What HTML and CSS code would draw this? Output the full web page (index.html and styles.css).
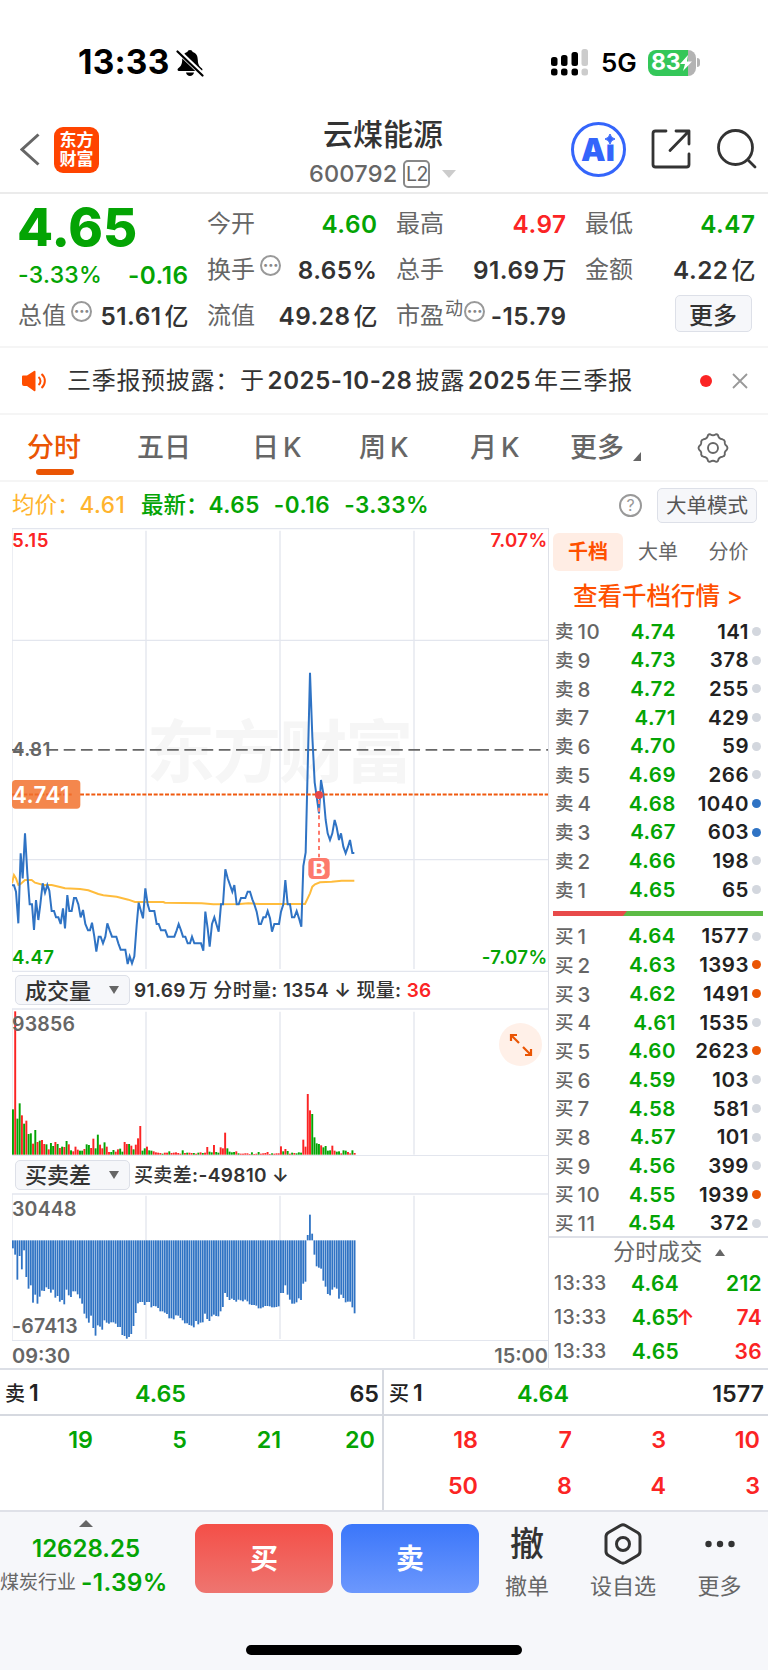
FILE: index.html
```
<!DOCTYPE html>
<html lang="zh-CN">
<head>
    <meta charset="UTF-8">
    <meta name="viewport" content="width=device-width, initial-scale=1.0">
    <title>云煤能源 600792</title>
    <link rel="stylesheet" href="styles.css">
</head>
<body>
    <div class="status-bar">
        <span class="clock">13:33</span>
        <svg class="bell" width="28" height="28" viewBox="0 0 28 28">
            <path d="M14 1c-1.500 0-2.300.8-2.700 1.900C7.500 4 6.300 7 6.200 11c-.2 5-1.700 6.500-4.200 8.600-.9.900-.5 2.400.9 2.400h22.200c1.400 0 1.800-1.500.9-2.400-2.500-2.100-4-3.600-4.200-8.600-.1-4-1.300-7-5.100-8.100C16.300 1.800 15.500 1 14 1zM10 23.500h8c-.4 2.200-2 3.500-4 3.500s-3.600-1.300-4-3.500z"/>
            <path d="M2 2l25 24" stroke="#fff" stroke-width="5"/>
            <path d="M1.500 2.500l25 24" stroke="#000" stroke-width="2.200" stroke-linecap="round"/>
        </svg>
        <div class="status-right">
            <svg width="38" height="27" viewBox="0 0 38 27">
                <g fill="#000">
                    <rect x="0" y="8" width="6.500" height="9" rx="2.500"/><rect x="10" y="6" width="6.500" height="11" rx="2.500"/><rect x="20.500" y="3" width="6.500" height="14" rx="2.500"/>
                    <rect x="0" y="19.500" width="6.500" height="7" rx="2.500"/><rect x="10" y="19.500" width="6.500" height="7" rx="2.500"/><rect x="20.500" y="19.500" width="6.500" height="7" rx="2.500"/>
                </g>
                <g fill="#ccc"><rect x="30.500" y="0" width="6.500" height="17" rx="2.500"/><rect x="30.500" y="19.500" width="6.500" height="7" rx="2.500"/></g>
            </svg>
            <span class="net">5G</span>
            <div class="battery"><span>83</span><svg width="12" height="16" viewBox="0 0 12 16"><path d="M8 0L0 9h5l-2 7 9-9.500H7z" fill="#fff"/></svg></div>
            <i class="battery-cap"></i>
        </div>
    </div>

    <header class="header">
        <div class="header-left">
            <svg width="20" height="33" viewBox="0 0 20 33" fill="none" stroke="#666" stroke-width="3"><path d="M18.500 1.500L2 16.500l16.500 15"/></svg>
            <div class="logo">东方<br>财富</div>
        </div>
        <div class="title">
            <h1>云煤能源</h1>
            <div class="code">600792<span class="l2">L2</span><i class="tri-down light"></i></div>
        </div>
        <div class="header-right">
            <div class="ai">Ai<svg width="12" height="12" viewBox="0 0 12 12"><path d="M0 0h12v10.500H0z" fill="#fff"/><path d="M6 0q.8 4.200 5 5-4.200.8-5 5-.8-4.200-5-5 4.200-.8 5-5z" fill="#3465fb" stroke="#3465fb"/></svg></div>
            <svg width="41" height="40" viewBox="0 0 41 40" fill="none" stroke="#333" stroke-width="2.800" stroke-linecap="round" stroke-linejoin="round"><path d="M15 2H4.500a2.500 2.500 0 0 0-2.500 2.500v31A2.500 2.500 0 0 0 4.500 38h31a2.500 2.500 0 0 0 2.500-2.500V25M25 2h13v13M38 2L19 21.500"/></svg>
            <svg width="40" height="40" viewBox="0 0 40 40" fill="none" stroke="#333" stroke-width="2.800" stroke-linecap="round"><circle cx="18.500" cy="18.500" r="17"/><path d="M31 31l7 7"/></svg>
        </div>
    </header>

    <section class="quote">
        <div class="quote-main">
            <div class="last-price">4.65</div>
            <div class="line"><b class="green chg">-3.33%</b><b class="green">-0.16</b></div>
            <div class="line"><span>总值<i class="dots">···</i></span><b>51.61<em>亿</em></b></div>
        </div>
        <div class="quote-col">
            <div class="line"><span>今开</span><b class="green">4.60</b></div>
            <div class="line"><span>换手<i class="dots">···</i></span><b>8.65%</b></div>
            <div class="line"><span>流值</span><b>49.28<em>亿</em></b></div>
        </div>
        <div class="quote-col">
            <div class="line"><span>最高</span><b class="red">4.97</b></div>
            <div class="line"><span>总手</span><b>91.69<em>万</em></b></div>
            <div class="line"><span>市盈<sup>动</sup><i class="dots pe">···</i></span><b>-15.79</b></div>
        </div>
        <div class="quote-col">
            <div class="line"><span>最低</span><b class="green">4.47</b></div>
            <div class="line"><span>金额</span><b>4.22<em>亿</em></b></div>
            <div class="line end"><button class="btn-more">更多</button></div>
        </div>
    </section>

    <section class="notice">
        <svg width="26" height="22" viewBox="0 0 26 22"><path d="M1 6.500Q1 5.500 2 5.500h4L13 1q1.500-.8 1.500 1v18q0 1.800-1.500 1L6 16H3Q1 16 1 14z" fill="#ff4e00"/><path d="M17.500 7a5 5 0 0 1 0 8M20.500 4a9 9 0 0 1 0 14" fill="none" stroke="#ff4e00" stroke-width="2"/></svg>
        <p>三季报预披露：于<span>2025-10-28</span>披露<span>2025</span>年三季报</p>
        <i class="red-dot"></i>
        <svg width="16" height="16" viewBox="0 0 16 16" stroke="#999" stroke-width="1.800"><path d="M1 1l14 14M15 1L1 15"/></svg>
    </section>

    <nav class="tabs">
        <a class="active">分时</a>
        <a>五日</a>
        <a>日<span>K</span></a>
        <a>周<span>K</span></a>
        <a>月<span>K</span></a>
        <a class="tab-more">更多<i></i></a>
        <svg width="32" height="32" viewBox="0 0 32 32" fill="none" stroke="#666" stroke-width="1.900" stroke-linejoin="round"><path d="M11 3.200Q12 2 13.500 2.400Q16 4.200 18.500 2.400Q20 2 21 3.200Q21.500 7 25.500 7.300Q27.500 7.800 27.800 9.500Q27.500 11.500 28.200 12.500Q30.500 14.500 30.500 16T28.200 19.500Q27.500 20.500 27.800 22.500Q27.500 24.200 25.500 24.700Q21.500 25 21 28.800Q20 30 18.500 29.600Q16 27.800 13.500 29.600Q12 30 11 28.800Q10.500 25 6.500 24.700Q4.500 24.200 4.200 22.500Q4.500 20.500 3.800 19.500Q1.500 17.500 1.500 16T3.800 12.500Q4.500 11.500 4.200 9.500Q4.500 7.800 6.500 7.300Q10.500 7 11 3.200z"/><circle cx="16" cy="16" r="5"/></svg>
    </nav>

    <div class="info">
        <span class="avg">均价：<b>4.61</b></span>
        <span class="green now">最新：<b>4.65</b><b>-0.16</b><b>-3.33%</b></span>
        <i class="help">?</i>
        <button class="btn-mode">大单模式</button>
    </div>

    <main class="board">
        <div class="charts">
            <svg class="chart-price" id="price" width="536" height="444" viewBox="36 24 1608 1332">
                <text class="watermark" x="440" y="772" textLength="800">东方财富</text>
                <g class="grid">
                    <path d="M36 25.500H1644M36 361H1644M36 1019H1644M36 1354.500H1644M36 24V1356M438 32V1347M840 32V1347M1242 32V1347"/>
                </g>
                <path d="M36 689.500H1644" class="mid-line"/>
                <polyline class="avg-line" points="36,1090 42,1065 48,1075 55,1095 62,1092 75,1080 95,1080 105,1088 130,1095 155,1095 180,1101 195,1105 240,1107 265,1111 295,1122 310,1126 350,1130 385,1139 405,1146 490,1146 495,1148 605,1150 640,1153 720,1152 745,1150 780,1152 915,1152 930,1120 937,1100 945,1093 960,1087 995,1085 1025,1082 1063,1082"/>
                <polyline class="price-line" points="36,1096 42,1096 48,1115 55,1210 62,1000 68,1075 75,940 82,1060 89,1153 96,1153 102,1230 108,1140 115,1200 121,1153 128,1090 135,1118 142,1095 148,1112 155,1173 162,1173 168,1192 175,1192 182,1212 189,1165 195,1225 202,1125 208,1173 215,1173 222,1134 228,1134 235,1153 242,1192 249,1170 256,1212 264,1231 270,1231 276,1208 283,1250 289,1295 296,1250 302,1250 309,1270 316,1250 322,1210 329,1231 336,1250 349,1250 355,1270 362,1289 376,1289 383,1332 389,1309 396,1330 403,1309 410,1215 416,1148 422,1170 429,1195 436,1105 443,1153 449,1173 463,1173 470,1212 476,1212 483,1231 496,1231 503,1250 523,1250 530,1231 536,1212 543,1231 549,1250 556,1250 563,1270 570,1270 576,1250 583,1270 603,1270 610,1292 616,1175 623,1225 629,1280 636,1212 643,1192 649,1212 656,1235 663,1153 669,1153 676,1048 683,1075 697,1115 703,1095 710,1153 716,1153 723,1134 736,1134 743,1115 750,1115 757,1138 763,1153 770,1175 777,1212 783,1212 790,1192 797,1192 803,1173 810,1195 816,1235 823,1212 837,1212 843,1175 850,1153 856,1080 863,1153 870,1153 876,1192 883,1192 890,1173 897,1195 904,1220 910,1038 917,997 930,458 937,650 944,787 950,830 957,880 963,780 970,820 977,900 983,940 990,960 997,940 1004,900 1010,922 1017,960 1023,940 1030,980 1037,1000 1044,980 1050,960 1057,999 1063,999"/>
                <path d="M36 823.500H1644" class="cost-line"/>
                <rect x="36" y="780" width="205" height="86" rx="11" fill="#f4874d"/>
                <path d="M36 823.500H215" class="cost-line" opacity=".6"/>
                <path d="M957 840V1012" class="buy-line"/>
                <circle cx="957" cy="825" r="12" fill="#e5484a"/>
                <rect x="925" y="1014" width="64" height="63" rx="14" fill="#fd7a6c"/>
                <text x="957" y="1067" class="buy-mark">B</text>
                <text x="36" y="81" class="lbl red">5.15</text>
                <text x="1643" y="81" class="lbl red end">7.07%</text>
                <text x="36" y="708" class="lbl">4.81</text>
                <text x="36" y="848" class="tag">4.741</text>
                <text x="36" y="1331" class="lbl green">4.47</text>
                <text x="1643" y="1331" class="lbl green end">-7.07%</text>
            </svg>

            <div class="sub-head">
                <button class="picker"><span>成交量</span><i class="tri-down"></i></button>
                <p>91.69<em class="unit">万</em> <em>分时量</em>: 1354 ↓ <em>现量</em>: <span class="red">36</span></p>
            </div>
            <div class="pane">
                <svg id="volume" width="536" height="148" viewBox="36 113 1608 444">
                    <path class="grid" d="M36 116H1644M36 556H1644M36 116V556M438 124V553M840 124V553M1242 124V553"/>
                </svg>
                <span class="pane-label">93856</span>
                <div class="expand"><svg width="24" height="24" viewBox="0 0 24 24" fill="none" stroke="#ea5504" stroke-width="2.200"><path d="M2 8V2h6M2 2l8 8M22 16v6h-6M22 22l-8-8"/></svg></div>
            </div>

            <div class="sub-head second">
                <button class="picker"><span>买卖差</span><i class="tri-down"></i></button>
                <p><em>买卖差</em>:-49810 ↓</p>
            </div>
            <div class="pane">
                <svg id="diff" width="536" height="148" viewBox="36 98 1608 444">
                    <path class="grid" d="M36 101H1644M36 541H1644M36 101V541M438 106V536M840 106V536M1242 106V536"/>
                </svg>
                <span class="pane-label">30448</span>
                <span class="pane-label low">-67413</span>
            </div>
            <div class="axis"><span>09:30</span><span>15:00</span></div>
        </div>

        <aside class="book">
            <div class="book-tabs"><a class="on">千档</a><a>大单</a><a>分价</a></div>
            <div class="book-link">查看千档行情 &gt;</div>
            <div class="level"><span>卖<b>10</b></span><b>4.74</b><b>141</b><i></i></div>
            <div class="level"><span>卖<b>9</b></span><b>4.73</b><b>378</b><i></i></div>
            <div class="level"><span>卖<b>8</b></span><b>4.72</b><b>255</b><i></i></div>
            <div class="level"><span>卖<b>7</b></span><b>4.71</b><b>429</b><i></i></div>
            <div class="level"><span>卖<b>6</b></span><b>4.70</b><b>59</b><i></i></div>
            <div class="level"><span>卖<b>5</b></span><b>4.69</b><b>266</b><i></i></div>
            <div class="level"><span>卖<b>4</b></span><b>4.68</b><b>1040</b><i class="big-sell"></i></div>
            <div class="level"><span>卖<b>3</b></span><b>4.67</b><b>603</b><i class="big-sell"></i></div>
            <div class="level"><span>卖<b>2</b></span><b>4.66</b><b>198</b><i></i></div>
            <div class="level"><span>卖<b>1</b></span><b>4.65</b><b>65</b><i></i></div>
            <div class="ratio"></div>
            <div class="level"><span>买<b>1</b></span><b>4.64</b><b>1577</b><i></i></div>
            <div class="level"><span>买<b>2</b></span><b>4.63</b><b>1393</b><i class="big-buy"></i></div>
            <div class="level"><span>买<b>3</b></span><b>4.62</b><b>1491</b><i class="big-buy"></i></div>
            <div class="level"><span>买<b>4</b></span><b>4.61</b><b>1535</b><i></i></div>
            <div class="level"><span>买<b>5</b></span><b>4.60</b><b>2623</b><i class="big-buy"></i></div>
            <div class="level"><span>买<b>6</b></span><b>4.59</b><b>103</b><i></i></div>
            <div class="level"><span>买<b>7</b></span><b>4.58</b><b>581</b><i></i></div>
            <div class="level"><span>买<b>8</b></span><b>4.57</b><b>101</b><i></i></div>
            <div class="level"><span>买<b>9</b></span><b>4.56</b><b>399</b><i></i></div>
            <div class="level"><span>买<b>10</b></span><b>4.55</b><b>1939</b><i class="big-buy"></i></div>
            <div class="level"><span>买<b>11</b></span><b>4.54</b><b>372</b><i></i></div>
            <div class="deals">
                <div class="deals-head">分时成交<i class="tri-up"></i></div>
                <div class="deal"><span>13:33</span><b class="green">4.64</b><i></i><b class="green">212</b></div>
                <div class="deal"><span>13:33</span><b class="green">4.65</b><i class="red">↑</i><b class="red">74</b></div>
                <div class="deal"><span>13:33</span><b class="green">4.65</b><i></i><b class="red">36</b></div>
            </div>
        </aside>
    </main>

    <section class="queue">
        <div class="side">
            <div class="side-head"><span>卖<b>1</b></span><b class="green">4.65</b><b>65</b></div>
            <div class="orders green"><b>19</b><b>5</b><b>21</b><b>20</b></div>
        </div>
        <div class="side">
            <div class="side-head"><span>买<b>1</b></span><b class="green">4.64</b><b>1577</b></div>
            <div class="orders red"><b>18</b><b>7</b><b>3</b><b>10</b><b>50</b><b>8</b><b>4</b><b>3</b></div>
        </div>
    </section>

    <footer class="footer">
        <div class="sector">
            <i class="tri-up"></i>
            <b class="green">12628.25</b>
            <div>煤炭行业<b class="green">-1.39%</b></div>
        </div>
        <button class="trade buy">买</button>
        <button class="trade sell">卖</button>
        <div class="tool"><strong>撤</strong><span>撤单</span></div>
        <div class="tool wide"><svg width="40" height="42" viewBox="0 0 40 42" fill="none" stroke="#333" stroke-width="3" stroke-linejoin="round"><path d="M17.500 2.500q2.500-1.300 5 0l12 7q2.500 1.500 2.500 4v15q0 2.500-2.500 4l-12 7q-2.500 1.300-5 0l-12-7q-2.500-1.500-2.500-4v-15q0-2.500 2.500-4z"/><circle cx="20" cy="21" r="6.500"/></svg><span>设自选</span></div>
        <div class="tool last"><svg width="40" height="42" viewBox="0 0 40 42" fill="#333"><circle cx="8.500" cy="21" r="3.200"/><circle cx="20" cy="21" r="3.200"/><circle cx="31.500" cy="21" r="3.200"/></svg><span>更多</span></div>
        <div class="home-bar"></div>
    </footer>

    <script src="script.js"></script>
</body>
</html>
```

FILE: styles.css
```
* {
    box-sizing: border-box;
}

body {
    margin: 0;
    width: 768px;
    height: 1670px;
    overflow: hidden;
    background: #fff;
    color: #333;
    font-family: Inter, "Noto Sans CJK SC", sans-serif;
    font-size: 24px;
    line-height: 1;
}

i, em {
    font-style: normal;
}

b {
    font-weight: 600;
}

button {
    font-family: inherit;
    padding: 0;
    color: #333;
    background: #f6f7fa;
    border: 1px solid #dde0e8;
    border-radius: 5px;
}

svg {
    display: block;
    flex: none;
}

.green { color: #04a404; fill: #04a404; }
.red { color: #fb2424; fill: #fb2424; }

.tri-down, .tri-up {
    display: inline-block;
    border: 5px solid transparent;
}

.tri-down {
    border-top: 8px solid #666;
    border-bottom: 0;
}

.tri-down.light {
    border-width: 8px 7px 0;
    border-top-color: #ccc;
    margin-left: 12px;
}

.tri-up {
    border-bottom: 7px solid #666;
    border-top: 0;
}

/* 状态栏 */
.status-bar {
    height: 112px;
    padding: 13px 68px 0 78px;
    display: flex;
    align-items: center;
    color: #000;
}

.clock {
    font-size: 33.500px;
    font-weight: 700;
    width: 98px;
    letter-spacing: .2px;
}

.status-right {
    margin-left: auto;
    display: flex;
    align-items: center;
}

.net {
    font-size: 26px;
    font-weight: 600;
    margin: 1px 12px 0;
    width: 35px;
}

.battery {
    width: 48px;
    height: 26px;
    border-radius: 8px;
    background: linear-gradient(90deg, #34c759 84%, #b3b3b3 84%);
    color: #fff;
    font-size: 23px;
    font-weight: 700;
    display: flex;
    align-items: center;
    padding-left: 3px;
    letter-spacing: -.3px;
}

.battery-cap {
    width: 3px;
    height: 9px;
    margin-left: 1px;
    border-radius: 0 3px 3px 0;
    background: #b3b3b3;
}

/* 标题栏 */
.header {
    height: 82px;
    display: grid;
    grid-template-columns: 250px 1fr 250px;
    border-bottom: 2px solid #ebebeb;
}

.header-left, .header-right {
    display: flex;
    align-items: center;
}

.header-left {
    padding: 0 0 5px 20px;
    gap: 14px;
}

.logo {
    width: 45px;
    height: 46px;
    border-radius: 9px;
    background: #ff4400;
    color: #fff;
    font-size: 17px;
    font-weight: 700;
    line-height: 19px;
    padding-top: 4px;
    text-align: center;
}

.title {
    text-align: center;
}

h1 {
    margin: 5px -2px 9px 0;
    padding-right: 4px;
    font-size: 30px;
    line-height: 34px;
    font-weight: 500;
}

.code {
    display: flex;
    align-items: center;
    height: 28px;
    padding-left: 59px;
    font-size: 23.500px;
    font-weight: 500;
    letter-spacing: .2px;
    color: #666;
}

.l2 {
    width: 27px;
    height: 28px;
    margin-left: 6px;
    border: 2px solid #888;
    border-radius: 5px;
    font-size: 19.500px;
    font-weight: 400;
    line-height: 25px;
    letter-spacing: -.5px;
}

.header-right {
    padding: 0 0 6px 53px;
    gap: 26px;
}

.header-right > svg {
    margin-left: -1px;
}

.ai {
    position: relative;
    width: 55px;
    height: 55px;
    margin: 1px 0 0;
    flex: none;
    border: 3px solid #3465fb;
    border-radius: 50%;
    color: #3465fb;
    font-size: 31px;
    font-weight: 900;
    line-height: 50px;
    padding-left: 7px;
}

.ai svg {
    position: absolute;
    left: 30px;
    top: 9px;
}

/* 行情 */
.quote {
    height: 154px;
    padding: 7px 11px 0 18px;
    display: grid;
    grid-template-columns: repeat(4, 170.500px);
    column-gap: 18.500px;
    border-bottom: 2px solid #f5f5f5;
}

.line {
    height: 46px;
    display: flex;
    justify-content: space-between;
    align-items: center;
    white-space: nowrap;
}

.line b {
    letter-spacing: .5px;
    font-size: 24.300px;
}

.line span {
    color: #666;
    display: flex;
    align-items: center;
}

.line em {
    margin-left: 3px;
    font-size: 24px;
    font-weight: 500;
    letter-spacing: 0;
}

.line.end {
    justify-content: flex-end;
}

.last-price {
    height: 54px;
    margin-left: -1px;
    font-size: 52.500px;
    font-weight: 800;
    line-height: 53px;
    color: #04a404;
}

.quote-main .line {
    height: 38px;
    padding-top: 3px;
}

.quote-main .line:last-child {
    height: 46px;
    padding-top: 0;
}

.line .chg {
    font-size: 23px;
    font-weight: 500;
    letter-spacing: .3px;
}

.dots {
    width: 21px;
    height: 21px;
    margin: 0 0 9px 5px;
    border: 2px solid #999;
    border-radius: 50%;
    font-size: 17px;
    font-weight: 700;
    line-height: 17px;
    letter-spacing: -.5px;
    text-align: center;
    color: #888;
}

.dots.pe {
    margin-left: 1px;
}

.line sup {
    font-size: 18px;
    margin: 0 0 14px 1px;
}

.btn-more {
    width: 77px;
    height: 37px;
    margin-right: 4px;
    margin-top: -5px;
    padding-bottom: 3px;
    font-size: 24px;
    font-weight: 500;
}

/* 公告 */
.notice {
    height: 67px;
    padding: 0 12px 0 21px;
    display: flex;
    align-items: center;
    border-bottom: 2px solid #f5f5f5;
}

.notice p {
    margin: 0 0 0 20px;
    width: 633px;
    white-space: nowrap;
    font-size: 24px;
    letter-spacing: .7px;
}

.notice p span {
    margin: 0 3px 0 3px;
    font-weight: 600;
    letter-spacing: .6px;
}

.red-dot {
    width: 12px;
    height: 12px;
    flex: none;
    border-radius: 50%;
    background: #fb2424;
    margin-right: 20px;
}

/* 周期切换 */
.tabs {
    height: 67px;
    padding: 1px 0 0 27px;
    display: grid;
    grid-template-columns: 110px 115px 107px 111px 100px 127px 32px;
    align-items: center;
    font-size: 27px;
    font-weight: 500;
    color: #666;
    border-bottom: 2px solid #f5f5f5;
}

.tabs a {
    position: relative;
    line-height: 34px;
}

.tabs a span {
    margin-left: 4px;
}

.tabs .active {
    color: #ea5504;
}

.tabs .active::after {
    content: "";
    position: absolute;
    left: 9px;
    top: 38px;
    width: 38px;
    height: 6px;
    border-radius: 3px;
    background: #ea5504;
}

.tab-more i {
    display: inline-block;
    position: relative;
    top: 4px;
    margin-left: 9px;
    border-left: 8px solid transparent;
    border-bottom: 9px solid #666;
}

/* 均价栏 */
.info {
    height: 46px;
    padding: 0 11px 0 12px;
    display: flex;
    align-items: center;
    font-size: 22.500px;
}

.avg {
    width: 129px;
    color: #ffb42e;
}

.now {
    font-weight: 500;
}

.info b {
    letter-spacing: .5px;
}

.avg b {
    font-weight: 500;
}

.now b {
    margin-right: 14px;
}

.info .help {
    width: 23px;
    height: 23px;
    margin-left: auto;
    border: 2px solid #999;
    border-radius: 50%;
    color: #999;
    font-size: 16px;
    line-height: 19px;
    text-align: center;
}

.btn-mode {
    width: 100px;
    height: 35px;
    margin-left: 15px;
    padding-bottom: 3px;
    font-size: 20.500px;
    color: #555;
}

/* 图表区 */
.board {
    height: 842px;
    display: grid;
    grid-template-columns: 548px 1fr;
    border-bottom: 2px solid #dcdfe6;
}

.charts {
    padding-left: 12px;
}

.grid {
    fill: none;
    stroke: #e3e6ee;
    stroke-width: 4;
}

.watermark {
    font-size: 205px;
    font-weight: 700;
    fill: #f6f6f6;
}

.mid-line {
    stroke: #666;
    stroke-width: 5;
    stroke-dasharray: 35 16.700;
}

.cost-line {
    stroke: #f05a10;
    stroke-width: 6;
    stroke-dasharray: 12 5;
}

.buy-line {
    stroke: #fd7a6c;
    stroke-width: 6;
    stroke-dasharray: 12 11;
}

.price-line, .avg-line {
    fill: none;
    stroke: #2f73c4;
    stroke-width: 6;
    stroke-linejoin: miter;
}

.avg-line {
    stroke: #ffbc3c;
}

.lbl {
    font-size: 56px;
    font-weight: 600;
    letter-spacing: 1.200px;
}

.lbl:not(.red):not(.green) {
    fill: #666;
}

.lbl.end {
    text-anchor: end;
}

.tag {
    font-size: 67px;
    font-weight: 600;
    letter-spacing: 1.200px;
    fill: #fff;
}

.buy-mark {
    font-size: 60px;
    font-weight: 700;
    fill: #fff;
    text-anchor: middle;
}

.sub-head {
    height: 36px;
    padding-left: 3px;
    display: flex;
    align-items: center;
}

.sub-head p {
    margin: 1px 0 0 4px;
    font-size: 19px;
    font-weight: 600;
    letter-spacing: .35px;
    white-space: nowrap;
}

.sub-head em {
    font-weight: 500;
}

.sub-head .unit {
    margin-left: 3px;
}

.sub-head.second {
    height: 37px;
}

.picker {
    width: 115px;
    height: 30px;
    padding: 0 10px 0 9px;
    display: flex;
    align-items: center;
    justify-content: space-between;
    font-size: 22px;
    font-weight: 500;
}

.picker span {
    margin-top: -3px;
}

.pane {
    position: relative;
    height: 148px;
}

.pane-label {
    position: absolute;
    left: 0;
    top: 6px;
    font-size: 19.500px;
    font-weight: 600;
    line-height: 20px;
    letter-spacing: .2px;
    color: #666;
}

.pane-label.low {
    top: 123px;
}

.expand {
    position: absolute;
    left: 487px;
    top: 15px;
    width: 43px;
    height: 43px;
    border-radius: 50%;
    background: #fff0e8;
    display: flex;
    align-items: center;
    justify-content: center;
}

.axis {
    height: 29px;
    display: flex;
    justify-content: space-between;
    align-items: center;
    font-size: 20px;
    font-weight: 600;
    color: #666;
}

/* 盘口 */
.book {
    border-left: 1px solid #dfe1e8;
    padding-left: 4px;
    overflow: hidden;
}

.book-tabs {
    height: 43px;
    padding-top: 5px;
    display: grid;
    grid-template-columns: 70px 70px 71px;
    font-size: 20px;
    line-height: 38px;
    text-align: center;
    color: #666;
}

.book-tabs a {
    height: 38px;
}

.book-tabs .on {
    border-radius: 6px;
    background: #ffede4;
    color: #ff5000;
    font-weight: 700;
}

.book-link {
    height: 46px;
    padding-left: 20px;
    font-size: 24.500px;
    line-height: 50px;
    font-weight: 500;
    color: #ff5000;
    white-space: nowrap;
}

.level {
    height: 28.700px;
    display: grid;
    grid-template-columns: 49px 72px 73px 12px;
    align-items: center;
    padding: 1px 0 0 2px;
    font-size: 20.500px;
    color: #222;
    text-align: right;
}

.level b {
    letter-spacing: .5px;
}

.level > b:nth-child(2) {
    color: #04a404;
}

.level span {
    display: flex;
    font-size: 18.500px;
    font-weight: 500;
    color: #666;
}

.level span b {
    font-size: 20.500px;
    font-weight: 500;
    margin-left: 4px;
    line-height: 19px;
}

.level i {
    width: 9px;
    height: 9px;
    margin-top: -1px;
    border-radius: 50%;
    background: #d3d7de;
    justify-self: end;
}

.level .big-sell { background: #2f73c4; }
.level .big-buy { background: #ea5504; }

.ratio {
    width: 210px;
    height: 5px;
    margin: 7px 0 6px;
    background: #5dbb46;
}

.ratio::before {
    content: "";
    display: block;
    width: 74px;
    height: 5px;
    background: #e84a4a;
    clip-path: polygon(0 0, 100% 0, 70px 100%, 0 100%);
}

.deals {
    margin: -1px 0 0 -4px;
    padding: 0 6px 0 5px;
    border-top: 2px solid #dfe1e8;
}

.deals-head {
    height: 28px;
    padding-left: 59px;
    display: flex;
    align-items: center;
    font-size: 22.300px;
    color: #666;
}

.deals-head i {
    margin-left: 13px;
}

.deal {
    height: 34px;
    display: grid;
    grid-template-columns: 54px 71px 15px 1fr;
    align-items: center;
    font-size: 21px;
    text-align: right;
}

.deal b {
    letter-spacing: .3px;
}

.deal span {
    font-size: 19.500px;
    font-weight: 500;
    letter-spacing: .4px;
    color: #666;
    text-align: left;
}

.deal i {
    font-size: 21px;
    font-weight: 600;
    margin-left: -3px;
}

/* 买卖队列 */
.queue {
    height: 142px;
    display: grid;
    grid-template-columns: 383px 385px;
    font-size: 23.300px;
    border-bottom: 2px solid #dfe1e8;
}

.side + .side {
    border-left: 2px solid #d6d9e0;
    margin-left: -1px;
}

.side-head {
    height: 46px;
    padding: 3px 4px 0 5px;
    display: grid;
    grid-template-columns: 60px 121px 1fr;
    align-items: center;
    text-align: right;
    border-bottom: 2px solid #d6d9e0;
    color: #222;
}

.side + .side .side-head {
    grid-template-columns: 60px 120px 1fr;
}

.side-head span {
    text-align: left;
    font-size: 20px;
    font-weight: 500;
    white-space: nowrap;
}

.side-head span b {
    font-size: 23px;
    margin-left: 4px;
}

.orders {
    padding: 1px 8px 0 0;
    display: grid;
    grid-template-columns: repeat(4, 94px);
    grid-auto-rows: 46px;
    justify-content: end;
    align-items: center;
    text-align: right;
}

/* 底部操作栏 */
.footer {
    position: relative;
    height: 158px;
    padding-top: 10px;
    display: flex;
    align-items: flex-start;
    background: #f6f7fa;
}

.sector {
    width: 195px;
    padding-right: 23px;
    display: flex;
    flex-direction: column;
    align-items: center;
    white-space: nowrap;
}

.sector > b {
    margin: 10px 0 9px;
    font-size: 24px;
}

.sector i {
    border-width: 0 7px 7px;
    margin-top: -2px;
}

.sector div {
    display: flex;
    align-items: center;
    align-self: flex-start;
    font-size: 19px;
    color: #666;
}

.sector div b {
    margin-left: 5px;
    font-size: 24.500px;
    letter-spacing: .3px;
}

.trade {
    width: 138px;
    height: 69px;
    margin: 2px 8px 0 0;
    padding-bottom: 3px;
    border: 0;
    border-radius: 11px;
    color: #fff;
    font-size: 28px;
    font-weight: 700;
}

.buy { background: linear-gradient(#f44f48, #ee7570); }
.sell { background: linear-gradient(#3b76fa, #6c98fd); }

.tool {
    width: 80px;
    display: flex;
    flex-direction: column;
    align-items: center;
    font-size: 22px;
    color: #666;
}

.tool.wide { width: 112px; }
.tool.last { width: 81px; }

.tool strong, .tool svg {
    height: 42px;
    margin: 1px 0 10px;
    font-size: 34px;
    line-height: 42px;
    font-weight: 500;
    color: #333;
}

.home-bar {
    position: absolute;
    left: 246px;
    bottom: 15px;
    width: 276px;
    height: 10px;
    border-radius: 5px;
    background: #000;
}
```

FILE: script.js
```
// 每分钟宽度
const STEP = 6.7;
const LEFT = 36;

const volume = 'g136 r430 g108 g154 r118 g93 r102 g62 g64 r33 g74 r38 g42 r44 r32 g31 r16 g35 g26 r38 g32 r20 g24 r23 g41 r31 g13 r10 r24 r15 g12 g12 r17 g31 g29 r20 r48 g19 g60 r30 r19 g37 r24 r8 g8 g14 r9 r16 g18 g9 r38 r32 g32 r27 g16 r30 r49 r86 g12 g19 r24 g13 g12 r10 r7 r6 r5 g3 r6 r6 g10 r5 r6 r7 r5 r3 g13 r5 g6 r6 r5 g5 r3 g6 r7 g5 r6 r23 g9 g7 r29 g8 g6 r22 r19 r66 g19 g9 g7 g8 r10 g4 r3 r3 r4 r4 r2 g7 r2 r3 g8 r3 r4 r5 r8 r2 g4 r3 r4 r4 r25 g10 r17 g11 r3 g6 r5 g4 g7 g6 r45 r24 r182 r133 g122 g52 g34 g32 r28 g22 g26 g12 g13 r27 r12 g9 g10 r4 g13 g12 r8 r4 g13 r5';

const diff = [
    264, 283, 358, 287, 327, 270, 350, 385, 375, 427, 403, 430, 409, 391, 392, 381, 386, 397, 388, 412,
    407, 424, 419, 432, 388, 405, 410, 393, 393, 402, 414, 430, 460, 474, 487, 466, 503, 526, 495, 499,
    508, 480, 487, 490, 486, 486, 490, 500, 500, 524, 527, 535, 530, 521, 497, 458, 429, 425, 425, 434,
    425, 425, 441, 437, 438, 443, 453, 453, 457, 461, 474, 474, 477, 465, 466, 473, 480, 489, 489, 494,
    496, 501, 482, 492, 487, 486, 460, 476, 482, 468, 463, 467, 468, 453, 440, 398, 410, 419, 415, 419,
    424, 418, 420, 423, 418, 423, 432, 434, 434, 436, 444, 444, 441, 437, 437, 438, 441, 441, 440, 438,
    398, 398, 375, 403, 418, 430, 430, 426, 414, 419, 370, 364, 224, 163, 220, 283, 318, 322, 325, 361,
    379, 401, 405, 388, 381, 385, 415, 403, 413, 426, 424, 424, 441, 459
];

function addBar(svg, i, y, height, color, width) {
    const rect = document.createElementNS('http://www.w3.org/2000/svg', 'rect');
    rect.setAttribute('x', LEFT + i * STEP);
    rect.setAttribute('y', y);
    rect.setAttribute('width', width);
    rect.setAttribute('height', height);
    rect.setAttribute('fill', color);
    svg.appendChild(rect);
}

const volumeSvg = document.getElementById('volume');
volume.split(' ').forEach(function(item, i) {
    const h = Number(item.slice(1));
    addBar(volumeSvg, i, 553 - h, h, item[0] === 'r' ? '#fb2424' : '#04a404', 5.8);
});

const diffSvg = document.getElementById('diff');
const ZERO = 240;
diff.forEach(function(y, i) {
    addBar(diffSvg, i, Math.min(y, ZERO), Math.abs(y - ZERO), '#2f73c4', 5.4);
});
```
